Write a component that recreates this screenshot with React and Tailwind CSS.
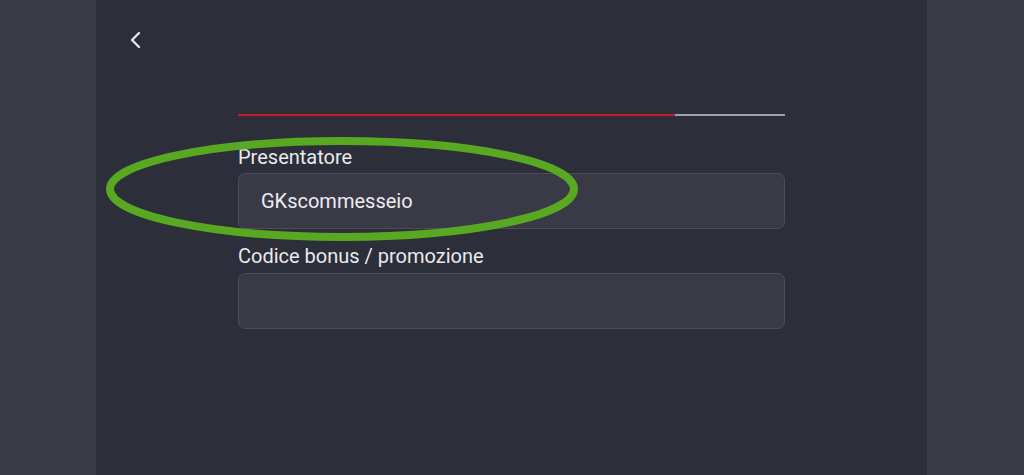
import React from 'react';

export default function App() {
  return (
    <div className="w-[1024px] h-[475px] bg-[#393a46] flex overflow-hidden" style={{ fontFamily: 'Roboto, "Liberation Sans", sans-serif' }}>
      <div className="relative ml-[96px] w-[831px] h-full bg-[#2c2e39]">
        <button className="absolute left-[32px] top-[30px] text-[#e4e5ea]">
          <svg width="20" height="20" viewBox="0 0 20 20" fill="none">
            <path d="M11 3 L4 10 L11 17" stroke="currentColor" strokeWidth="2.4" strokeLinecap="round" strokeLinejoin="round" />
          </svg>
        </button>

        <div className="pt-[114px] pl-[142px] w-[690px]">
          <div className="flex h-[2px] w-[547px]">
            <div className="w-[437px] bg-[#c81a22]" />
            <div className="flex-1 bg-[#9fa0ab]" />
          </div>

          <div className="mt-[29px] flex flex-col w-[547px]">
            <label className="text-[20px] leading-[24px] text-[#e9e9ee]">Presentatore</label>
            <div className="mt-[4px] h-[56px] rounded-[7px] border border-[#4b4d59] bg-[#393a46] flex items-center px-[22px] text-[20px] text-[#ececf1]">
              GKscommesseio
            </div>

            <label className="mt-[15px] text-[20px] leading-[24px] text-[#e9e9ee]">Codice bonus / promozione</label>
            <div className="mt-[5px] h-[56px] rounded-[7px] border border-[#4b4d59] bg-[#393a46]" />
          </div>
        </div>

        <svg className="absolute left-0 top-0 pointer-events-none" width="831" height="475">
          <ellipse cx="246" cy="189" rx="232" ry="48" fill="none" stroke="#58a921" strokeWidth="8" />
        </svg>
      </div>
    </div>
  );
}
